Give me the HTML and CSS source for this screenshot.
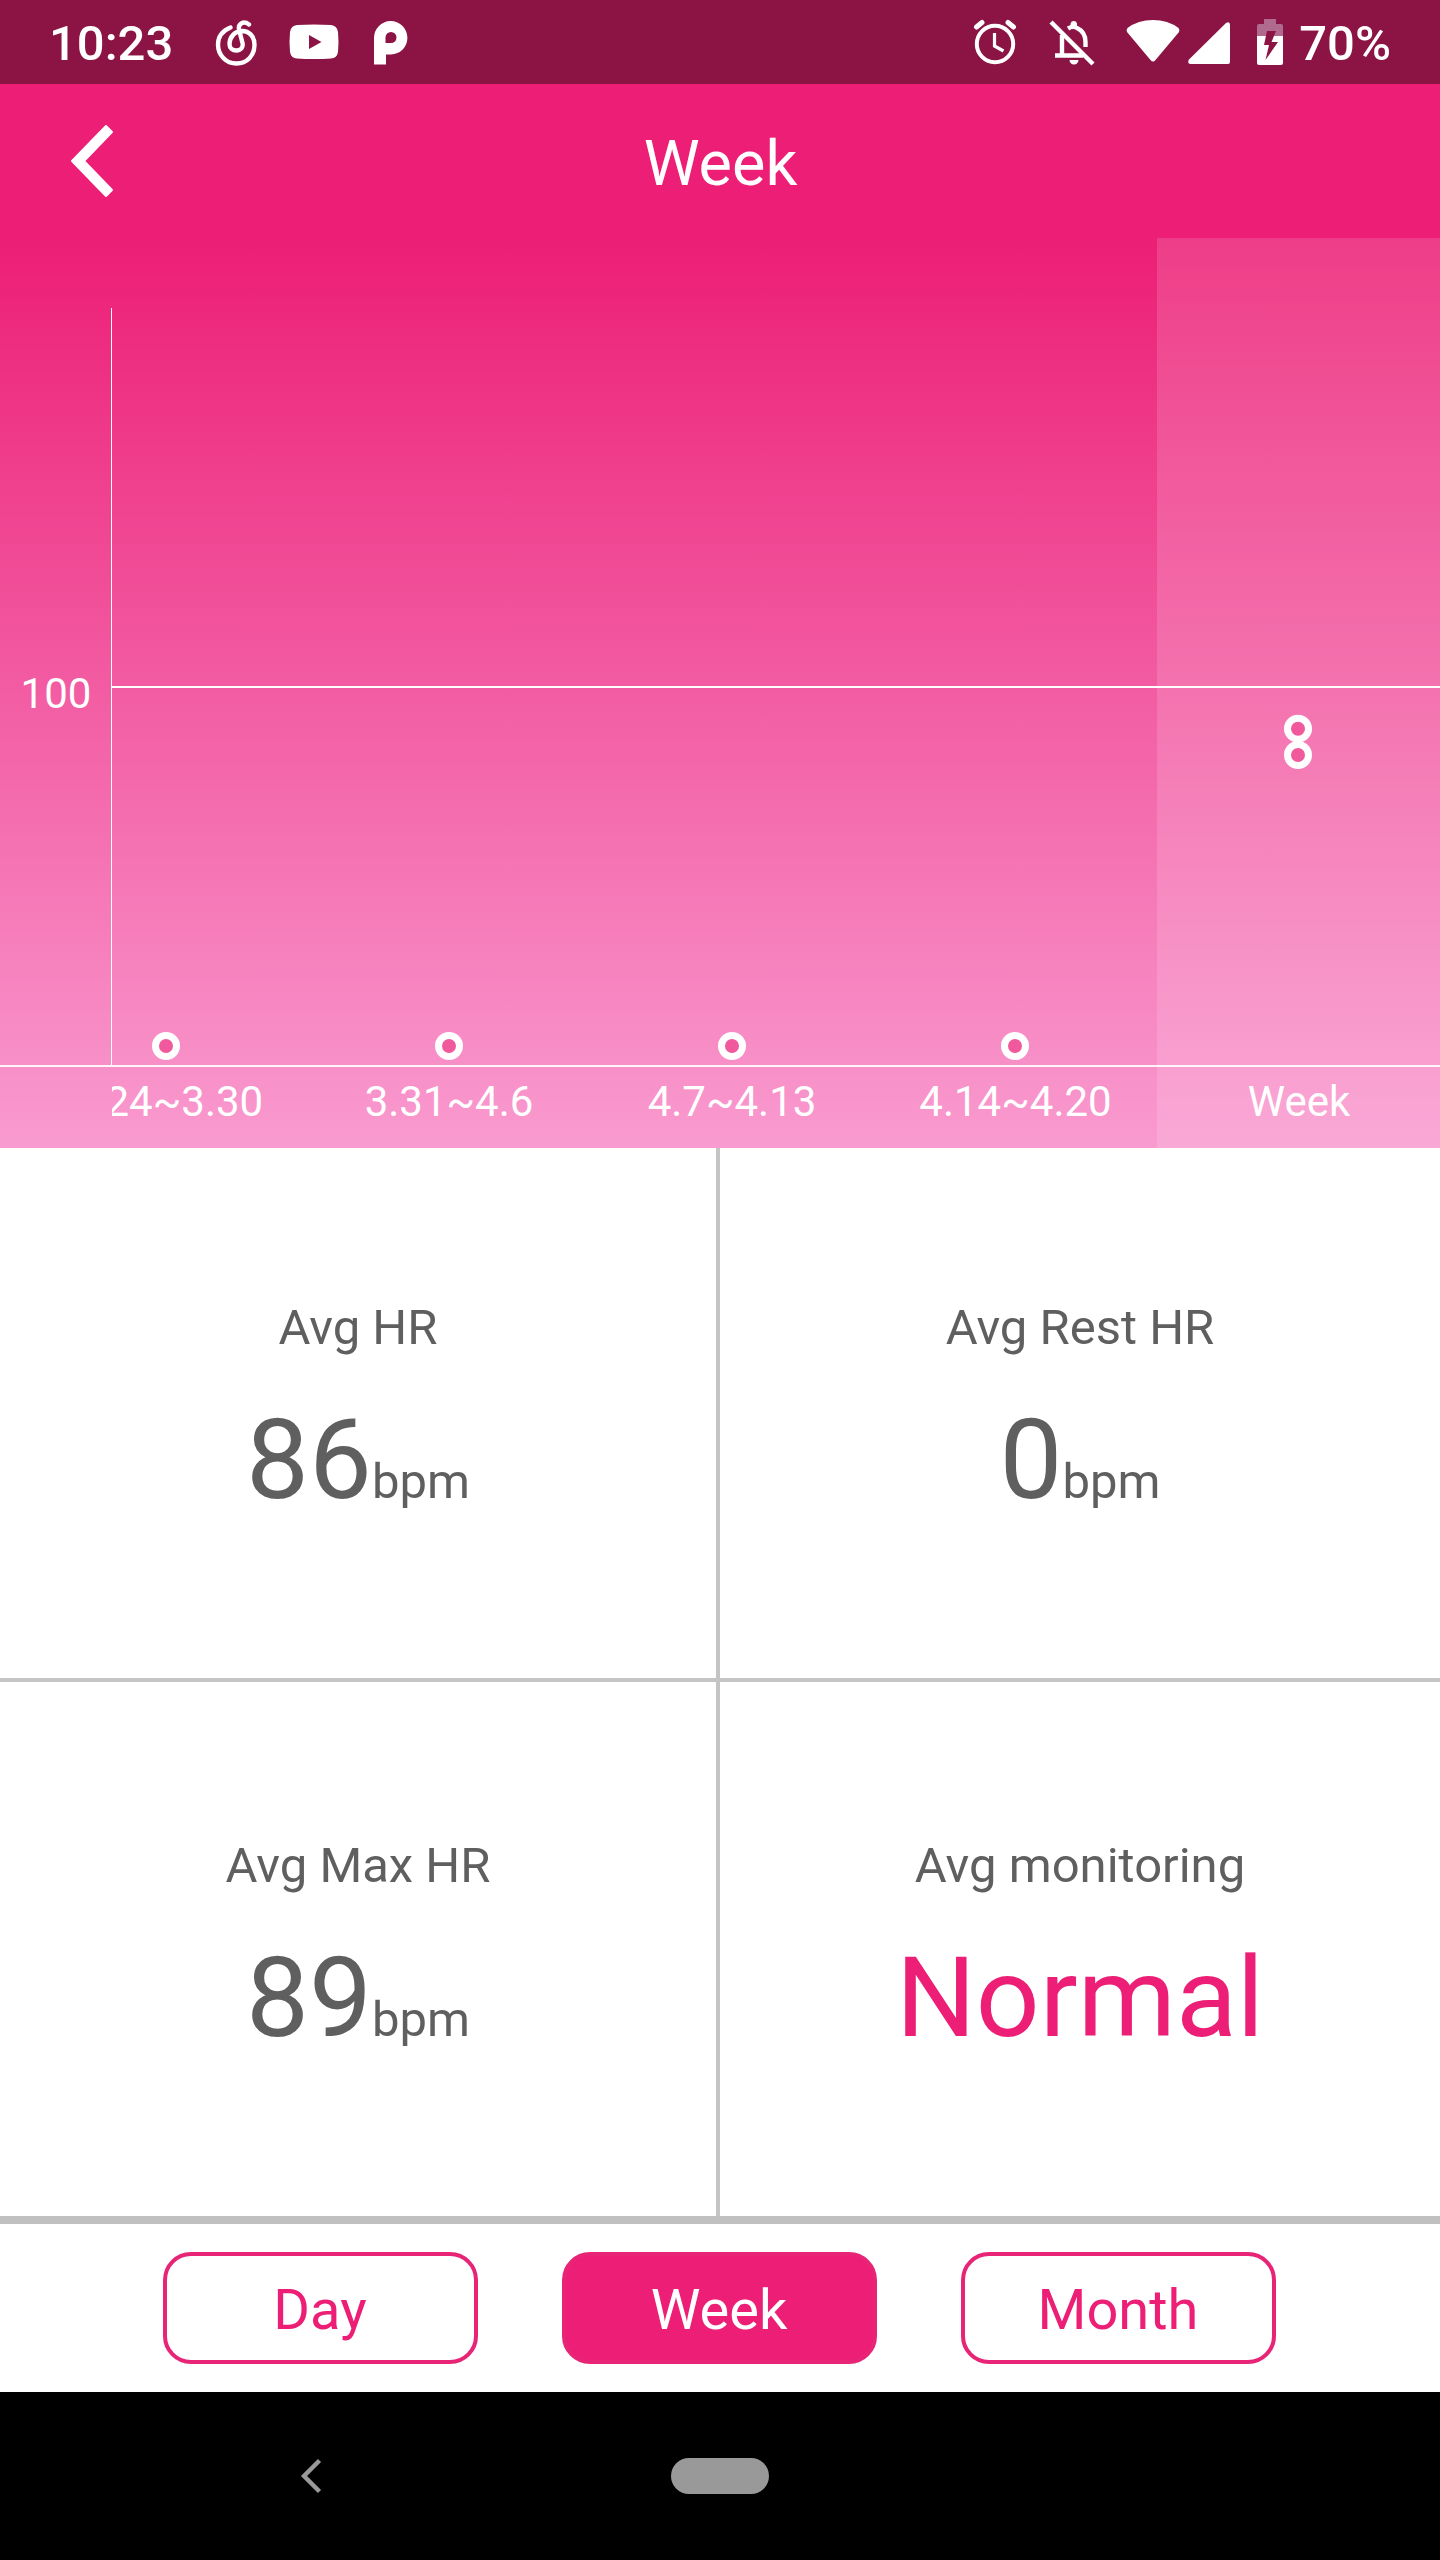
FILE: index.html
```html
<!DOCTYPE html>
<html lang="en">

<head>
    <meta charset="UTF-8">
    <meta name="viewport" content="width=device-width, initial-scale=1.0">
    <title>Week</title>
    <link rel="stylesheet" href="styles.css">
</head>

<body>
    <div class="status-bar">
        <span class="clock">10:23</span>
        <svg class="icon-music" width="44" height="50" viewBox="0 0 44 50" fill="none" stroke="#fff" stroke-width="4.4" stroke-linecap="round">
            <path d="M15.500 9.500C7 13 3 19 3 26.500C3 37 11 45.500 21.500 45.500C32 45.500 39.500 37.500 39.500 27C39.500 18 34 13 27 13C20 13 14.500 19 14.500 26C14.500 30 17.500 32.500 21.500 32.500C26 32.500 28.500 29 27.500 25L24 11.500C23 6.500 28 2 34 6.500"/>
        </svg>
        <svg class="icon-video" width="50" height="36" viewBox="0 0 50 36">
            <path fill="#fff" fill-rule="evenodd" d="M8 1Q25 0 42 1Q48 1.500 49 8Q50 18 49 28Q48 34 42 34.500Q25 35.500 8 34.500Q2 34 1 28Q0 18 1 8Q2 1.500 8 1ZM20 11V25L32.500 18Z"/>
        </svg>
        <svg class="icon-p" width="34" height="44" viewBox="0 0 34 44">
            <path fill="#fff" fill-rule="evenodd" d="M0 43.500V17A16.700 16.700 0 1 1 17 33.500H12V43.500ZM11.500 22H17A5.500 5.500 0 1 0 11.500 16.500Z"/>
        </svg>
        <div class="status-right">
            <svg class="icon-alarm" width="44" height="46" viewBox="0 0 44 46" fill="none" stroke="#fff">
                <circle cx="22" cy="25" r="18.200" stroke-width="4"/>
                <path stroke-width="5" stroke-linecap="round" d="M3.500 8L9 3.500M35 3.500L40.500 8"/>
                <path stroke-width="3.200" d="M21.500 14V27L30.500 32"/>
            </svg>
            <svg class="icon-bell" width="46" height="48" viewBox="0 0 46 48" fill="none" stroke="#fff">
                <path stroke-width="4.400" d="M13 16V36M6 36.500H34M19 9.500Q24 6.500 28 9Q36.500 13 36.500 23V28"/>
                <path stroke-width="4.400" d="M2 3L44 45"/>
                <path fill="#fff" stroke="none" d="M21.500 4.500A3.400 3.400 0 0 1 28 4.500V9H21.500ZM20.500 41H29.500A4.500 4.500 0 0 1 20.500 41Z"/>
            </svg>
            <svg class="icon-wifi" width="54" height="44" viewBox="0 0 54 44">
                <path fill="#fff" d="M1.500 9Q12 1 27 1T52.500 9Q54 11 53 13L29.500 41Q27 44 24.500 41L1 13Q0 11 1.500 9Z"/>
            </svg>
            <svg class="icon-signal" width="42" height="42" viewBox="0 0 42 42">
                <path fill="#fff" d="M1 37.500L38 1Q42-1 42 3V40Q42 42 40 42H2Q-1 41 1 37.500Z"/>
            </svg>
            <svg class="icon-battery" width="26" height="46" viewBox="0 0 26 46">
                <path fill="#b06a8d" d="M7 0H19V5H24Q26 5 26 7V17H0V7Q0 5 2 5H7Z"/>
                <path fill="#fff" d="M0 17H26V44Q26 46 24 46H2Q0 46 0 44Z"/>
                <path fill="#8b1444" d="M10 12H19L14.500 23H21L8.500 41L12 26H7Z"/>
            </svg>
            <span class="percent">70%</span>
        </div>
    </div>

    <div class="header">
        <svg class="back" width="44" height="74" viewBox="0 0 44 74">
            <path fill="#fff" stroke="#fff" stroke-width="2" stroke-linejoin="round" d="M36 2L42 8L14 37L42 66L36 72L2 37Z"/>
        </svg>
        <h1 class="title">Week</h1>
    </div>

    <div class="chart">
        <svg class="plot" width="1440" height="910" viewBox="0 0 1440 910">
            <defs>
                <clipPath id="plot-area">
                    <rect x="112" y="0" width="1328" height="910"/>
                </clipPath>
            </defs>
            <rect x="1157" y="0" width="283" height="910" fill="#fff" fill-opacity="0.14"/>
            <rect x="111" y="70" width="1" height="757" fill="#fff"/>
            <rect x="111" y="448" width="1329" height="2" fill="#fff"/>
            <rect x="0" y="827" width="1440" height="2" fill="#fff" fill-opacity="0.9"/>
            <text class="label" x="56" y="470">100</text>
            <g class="label" clip-path="url(#plot-area)">
                <text x="167" y="878">3.24~3.30</text>
                <text x="449" y="878">3.31~4.6</text>
                <text x="732" y="878">4.7~4.13</text>
                <text x="1015.500" y="878">4.14~4.20</text>
                <text x="1299" y="878">Week</text>
            </g>
            <g class="dot">
                <circle cx="166" cy="808" r="10.500"/>
                <circle cx="449" cy="808" r="10.500"/>
                <circle cx="732" cy="808" r="10.500"/>
                <circle cx="1015" cy="808" r="10.500"/>
                <circle cx="1298" cy="490.700" r="10.500"/>
                <circle cx="1298" cy="517" r="10.500"/>
            </g>
        </svg>
    </div>

    <div class="stats">
        <div class="cell">
            <p class="name">Avg HR</p>
            <p class="value">86<span class="unit">bpm</span></p>
        </div>
        <div class="cell">
            <p class="name">Avg Rest HR</p>
            <p class="value">0<span class="unit">bpm</span></p>
        </div>
        <div class="cell">
            <p class="name">Avg Max HR</p>
            <p class="value">89<span class="unit">bpm</span></p>
        </div>
        <div class="cell">
            <p class="name">Avg monitoring</p>
            <p class="value normal">Normal</p>
        </div>
    </div>

    <div class="tabs">
        <button class="tab">Day</button>
        <button class="tab active">Week</button>
        <button class="tab">Month</button>
    </div>

    <div class="nav-bar">
        <svg class="nav-back" width="22" height="36" viewBox="0 0 22 36" fill="none" stroke="#999" stroke-width="4.400">
            <path d="M19.500 2.500L4 18L19.500 33.500"/>
        </svg>
        <div class="nav-home"></div>
    </div>
</body>

</html>
```
FILE: styles.css
```css
* {
    box-sizing: border-box;
}
body {
    margin: 0;
    width: 1440px;
    height: 2560px;
    font-family: Roboto, sans-serif;
    background-color: #fff;
    overflow: hidden;
}
h1, p {
    margin: 0;
    font-weight: 400;
}
svg {
    display: block;
    flex: none;
}
.status-bar {
    display: flex;
    align-items: flex-start;
    height: 84px;
    padding-left: 49px;
    padding-right: 49px;
    background-color: #8b1444;
    color: #fff;
}
.clock,
.percent {
    font-size: 49px;
    font-weight: 500;
    line-height: 58px;
    margin-top: 15px;
}
.clock {
    width: 166px;
}
.icon-music {
    margin-top: 18px;
}
.icon-video {
    margin-top: 24px;
    margin-left: 30px;
}
.icon-p {
    margin-top: 21px;
    margin-left: 35px;
}
.status-right {
    display: flex;
    align-items: flex-start;
    margin-left: auto;
}
.icon-alarm {
    margin-top: 19px;
}
.icon-bell {
    margin-top: 19px;
    margin-left: 32px;
}
.icon-wifi {
    margin-top: 19px;
    margin-left: 31px;
}
.icon-signal {
    margin-top: 22px;
    margin-left: 8px;
}
.icon-battery {
    margin-top: 19px;
    margin-left: 27px;
}
.percent {
    margin-left: 16px;
}
.header {
    display: grid;
    grid-template-columns: 1fr auto 1fr;
    align-items: center;
    height: 154px;
    background-color: #ec1e75;
    color: #fff;
}
.back {
    margin-left: 70px;
}
.title {
    font-size: 63px;
    line-height: 74px;
    margin-top: 6px;
    padding-left: 1px;
}
.chart {
    height: 910px;
    background: linear-gradient(#ec1e75, #f99bd0);
}
.label {
    fill: #fff;
    font-size: 42px;
    text-anchor: middle;
}
.dot {
    fill: #f0599b;
    stroke: #fff;
    stroke-width: 7px;
}
.stats {
    display: grid;
    grid-template-columns: 720px 720px;
    grid-template-rows: 534px 534px;
    text-align: center;
    color: #5f5f5f;
}
.cell {
    padding-top: 151px;
    border-bottom: 4px solid #c4c4c4;
}
.cell:nth-child(odd) {
    border-right: 4px solid #c4c4c4;
}
.cell:nth-child(n+3) {
    padding-top: 155px;
    border-bottom: 0;
}
.name {
    font-size: 49px;
    line-height: 58px;
}
.value {
    font-size: 112px;
    line-height: 132px;
    margin-top: 37px;
}
.unit {
    font-size: 49px;
}
.normal {
    color: #ec1e75;
}
.tabs {
    display: flex;
    justify-content: center;
    align-items: center;
    gap: 84px;
    height: 176px;
    padding-right: 2px;
    border-top: 8px solid #c0c0c0;
}
.tab {
    width: 315px;
    height: 112px;
    padding: 3px 0 0;
    border: 4px solid #e82477;
    border-radius: 28px;
    background-color: #fff;
    color: #ec1e75;
    font-family: inherit;
    font-size: 56px;
}
.active {
    background-color: #ec1e75;
    color: #fff;
}
.nav-bar {
    display: flex;
    align-items: center;
    height: 168px;
    padding-left: 300px;
    background-color: #000;
}
.nav-home {
    width: 98px;
    height: 36px;
    margin-left: 349px;
    border-radius: 18px;
    background-color: #999;
}
```
